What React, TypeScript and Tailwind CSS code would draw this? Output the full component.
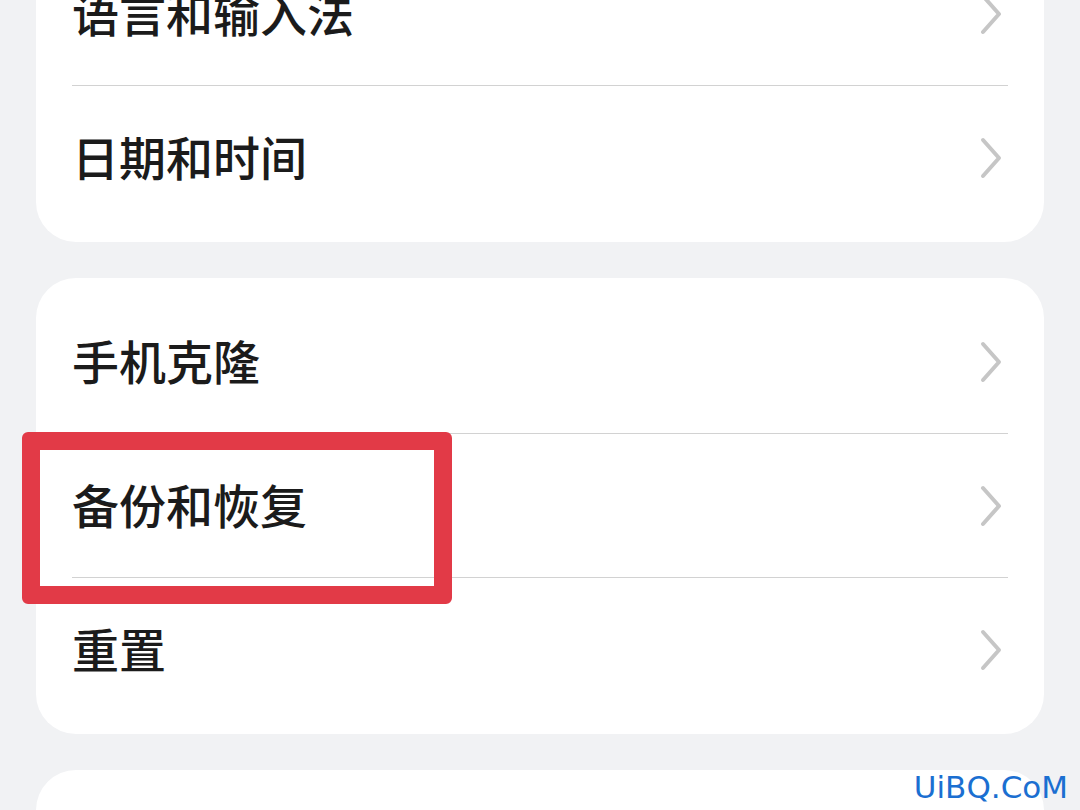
import React from 'react';

const groups: string[][] = [
  ['语言和输入法', '日期和时间'],
  ['手机克隆', '备份和恢复', '重置'],
  ['关于手机'],
];

function Chevron() {
  return (
    <svg width="26" height="44" viewBox="0 0 26 44" fill="none" className="shrink-0">
      <path d="M5 4 L21 22 L5 40" stroke="#c6c6c6" strokeWidth="4" strokeLinecap="round" strokeLinejoin="round" />
    </svg>
  );
}

export default function App() {
  return (
    <div
      className="relative w-[1080px] h-[810px] overflow-hidden bg-[#f1f2f4]"
      style={{ fontFamily: '"Noto Sans CJK SC", "Noto Sans", sans-serif' }}
    >
      <div className="flex flex-col gap-[36px] px-[36px] mt-[-70px]">
        {groups.map((items, gi) => (
          <div key={gi} className="bg-white rounded-[40px] pt-[12px] pb-[12px] pl-[36px] pr-[36px]">
            {items.map((label, i) => (
              <div
                key={label}
                className={`flex items-center justify-between h-[144px] ${
                  i < items.length - 1 ? 'border-b border-[#d2d2d2]' : ''
                }`}
              >
                <span className="mb-[5px] text-[47px] font-medium text-[#1b1b1b] leading-none">{label}</span>
                <div className="mr-[4px]">
                  <Chevron />
                </div>
              </div>
            ))}
          </div>
        ))}
      </div>

      {/* highlight annotation */}
      <div className="absolute left-[22px] top-[432px] w-[430px] h-[172px] border-[18px] border-[#e23a47] rounded-[6px]" />

      {/* watermark */}
      <div
        className="absolute right-[12px] bottom-[7px] text-[31px] leading-none text-[#1b6fd1]"
        style={{ fontFamily: '"DejaVu Sans", sans-serif' }}
      >
        UiBQ.CoM
      </div>
    </div>
  );
}
